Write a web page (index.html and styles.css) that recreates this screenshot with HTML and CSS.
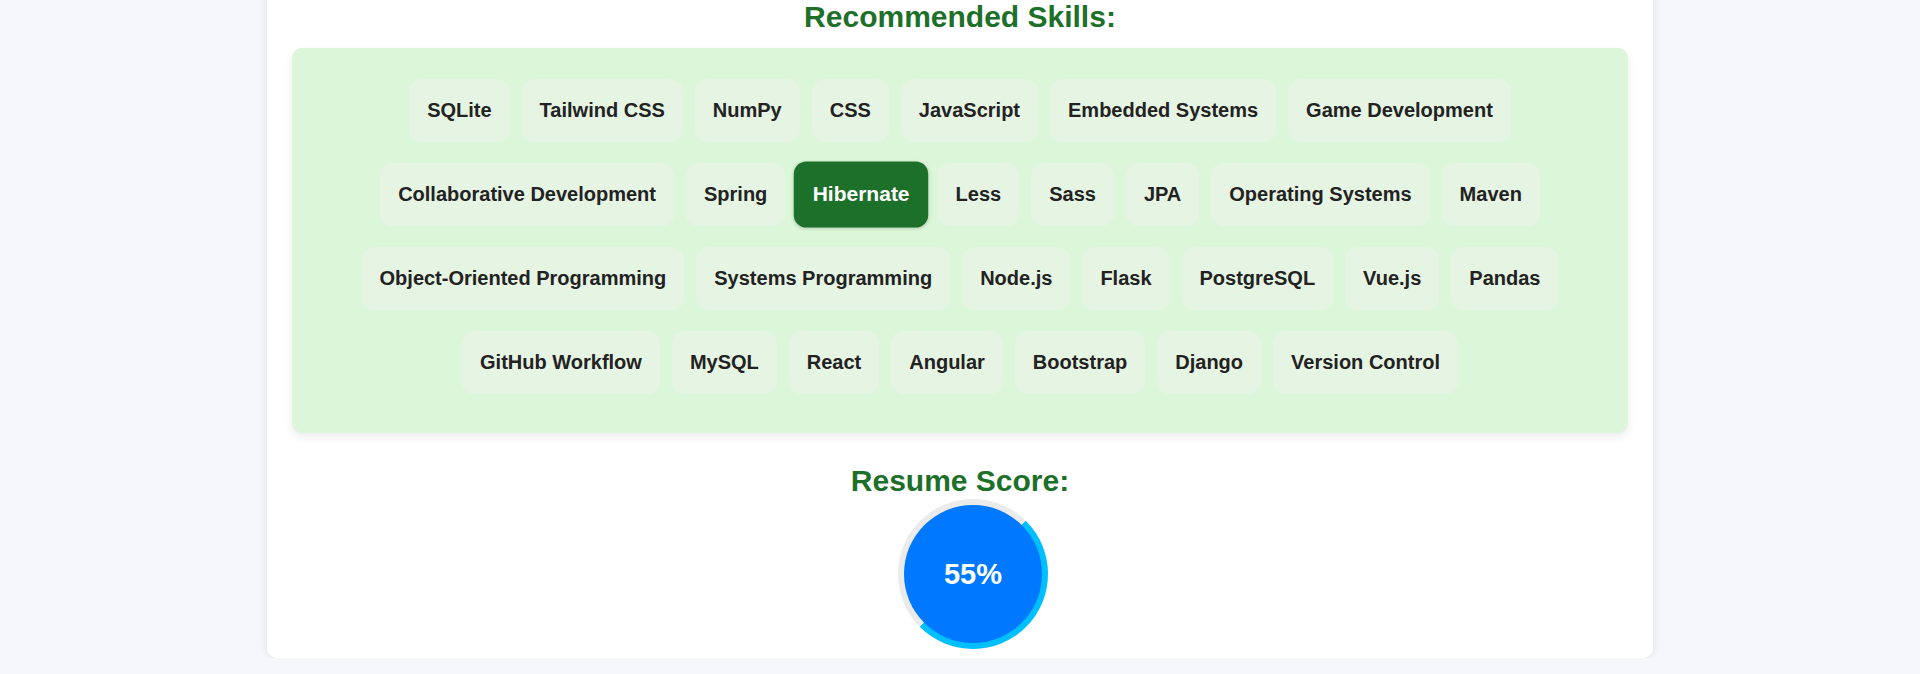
FILE: index.html
```html
<!DOCTYPE html>
<html lang="en">
<head>
<meta charset="utf-8">
<title>Resume Analysis</title>
<link rel="stylesheet" href="styles.css">
</head>
<body>
<main class="page">
  <section class="card">
    <h3 class="section-title">Recommended Skills:</h3>
    <div class="skills-box">
      <div class="skills">
        <span class="tag">SQLite</span>
        <span class="tag">Tailwind CSS</span>
        <span class="tag">NumPy</span>
        <span class="tag">CSS</span>
        <span class="tag">JavaScript</span>
        <span class="tag">Embedded Systems</span>
        <span class="tag">Game Development</span>
        <span class="tag">Collaborative Development</span>
        <span class="tag">Spring</span>
        <span class="tag tag-active">Hibernate</span>
        <span class="tag">Less</span>
        <span class="tag">Sass</span>
        <span class="tag">JPA</span>
        <span class="tag">Operating Systems</span>
        <span class="tag">Maven</span>
        <span class="tag">Object-Oriented Programming</span>
        <span class="tag">Systems Programming</span>
        <span class="tag">Node.js</span>
        <span class="tag">Flask</span>
        <span class="tag">PostgreSQL</span>
        <span class="tag">Vue.js</span>
        <span class="tag">Pandas</span>
        <span class="tag">GitHub Workflow</span>
        <span class="tag">MySQL</span>
        <span class="tag">React</span>
        <span class="tag">Angular</span>
        <span class="tag">Bootstrap</span>
        <span class="tag">Django</span>
        <span class="tag">Version Control</span>
      </div>
    </div>
    <h2 class="score-title">Resume Score:</h2>
    <div class="score-wrap">
      <div class="score-ring">
        <div class="score-disc">55%</div>
      </div>
    </div>
  </section>
</main>
</body>
</html>
```

FILE: styles.css
```css
html, body {
  margin: 0;
  padding: 0;
}

body {
  background: #f5f7fa;
  font-family: "Liberation Sans", Arial, sans-serif;
  color: #222;
}

.page {
  display: flex;
  justify-content: center;
}

.card {
  width: 1386px;
  box-sizing: border-box;
  margin-top: -30px;
  padding: 29px 25px 9px;
  background: #ffffff;
  border-radius: 10px;
  box-shadow: 0 0 10px rgba(0, 0, 0, 0.1);
}

.section-title {
  margin: 0 0 14px;
  font-size: 30px;
  line-height: 35px;
  font-weight: bold;
  text-align: center;
  color: #1d7029;
}

.skills-box {
  background: #dbf6d9;
  border-radius: 10px;
  padding: 31px 20px 39px;
  box-shadow: 0 4px 10px rgba(0, 0, 0, 0.08);
}

.skills {
  display: flex;
  flex-wrap: wrap;
  justify-content: center;
  gap: 21px 12px;
}

.tag {
  display: block;
  padding: 20px 18px;
  font-size: 20px;
  line-height: 23px;
  font-weight: bold;
  color: #222;
  background: #e6f4e3;
  border-radius: 12px;
}

.tag-active {
  background: #1d7029;
  color: #ffffff;
  transform: scale(1.05);
  box-shadow: 0 1px 3px rgba(0, 0, 0, 0.15);
}

.score-title {
  margin: 30px 0 1px;
  font-size: 30px;
  line-height: 35px;
  font-weight: bold;
  text-align: center;
  color: #1d7029;
}

.score-wrap {
  display: flex;
  justify-content: center;
}

.score-ring {
  width: 150px;
  height: 150px;
  margin-left: 26px;
  box-sizing: border-box;
  padding: 6px;
  border-radius: 50%;
  background: conic-gradient(from 45deg, #00bfff 0deg 180deg, #ebebeb 180deg 360deg);
}

.score-disc {
  width: 100%;
  height: 100%;
  border-radius: 50%;
  background: #0078ff;
  display: flex;
  align-items: center;
  justify-content: center;
  color: #ffffff;
  font-size: 29px;
  font-weight: bold;
}
```
